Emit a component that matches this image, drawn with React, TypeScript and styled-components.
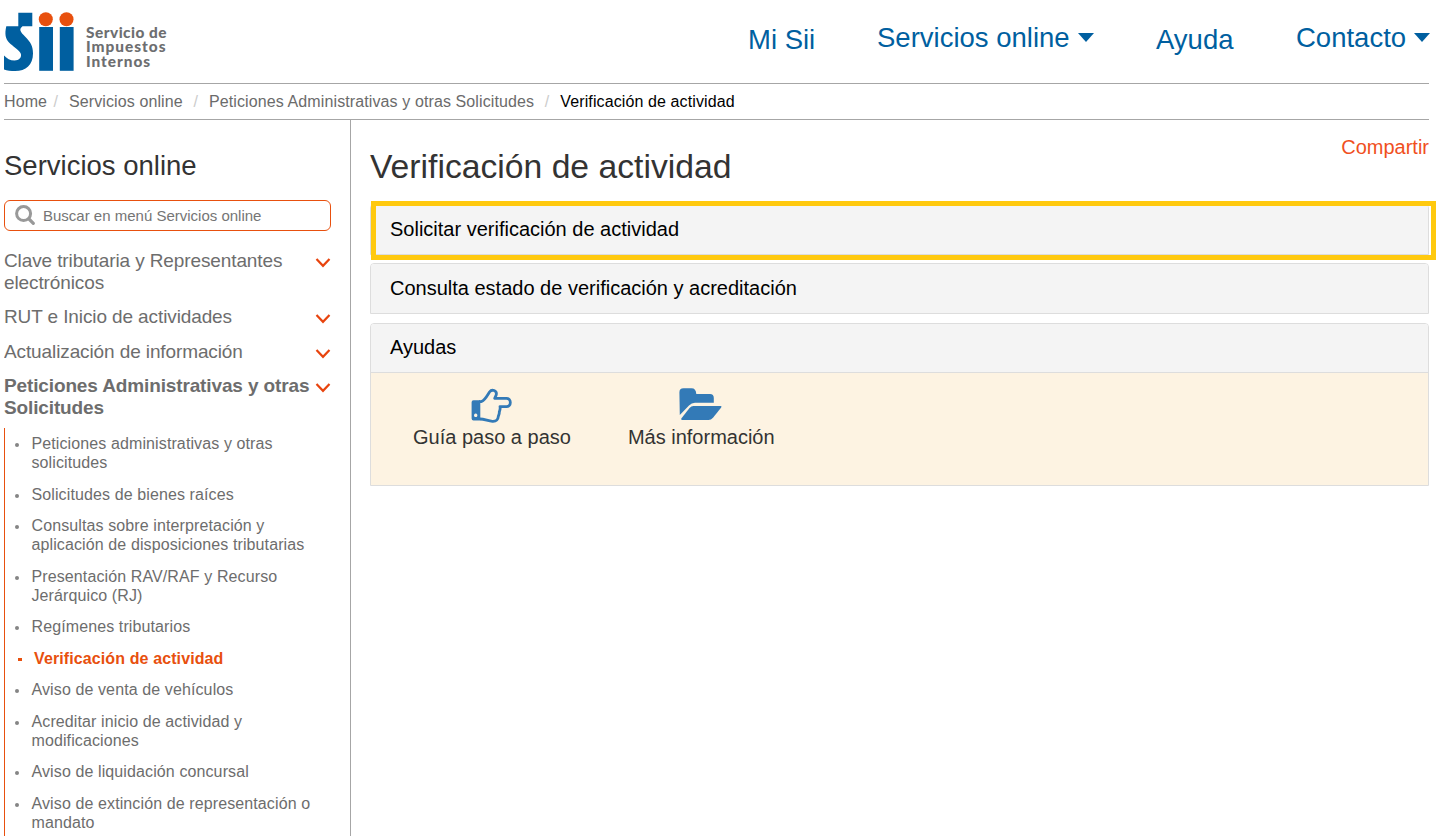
import React from "react";
import styled, { createGlobalStyle } from "styled-components";

const GlobalStyle = createGlobalStyle`
  *, *::before, *::after { box-sizing: border-box; }
  body {
    margin: 0;
    background: #fff;
    color: #333;
    font-family: "Liberation Sans", Arial, sans-serif;
    overflow: hidden;
  }
  h1, h2, p, ul, ol { margin: 0; padding: 0; font-weight: 400; }
  ul, ol { list-style: none; }
`;

const Page = styled.div`
  display: flex;
  flex-direction: column;
  height: 836px;
  padding: 0 15px 0 4px;
  overflow: hidden;
`;

const Header = styled.header`
  display: flex;
  justify-content: space-between;
  height: 84px;
  border-bottom: 1px solid #a6a6a6;
`;

const Brand = styled.div`
  display: flex;
  align-items: flex-start;
  padding-top: 12px;
`;

const BrandName = styled.div`
  margin: 13px 0 0 11px;
  font-family: Lato, sans-serif;
  font-size: 15.4px;
  font-weight: 900;
  line-height: 14.4px;
  color: #6d6e70;
`;

const BrandLine = styled.div<{ $spacing: number }>`
  letter-spacing: ${(p) => p.$spacing}px;
  white-space: nowrap;
`;

const Nav = styled.nav`
  display: flex;
  align-items: flex-start;
  margin-right: -1px;
`;

const NavItem = styled.a<{ $width: number; $top?: number }>`
  display: flex;
  justify-content: space-between;
  align-items: flex-start;
  width: ${(p) => p.$width}px;
  margin-left: 62px;
  padding-top: ${(p) => p.$top ?? 21}px;
  font-size: 27.5px;
  line-height: 34px;
  color: #005fa0;
  white-space: nowrap;
`;

const Caret = styled.span`
  margin-top: 12px;
  border: 8px solid transparent;
  border-top: 9px solid #005fa0;
  border-bottom: 0;
`;

const Breadcrumb = styled.ol`
  display: flex;
  height: 36px;
  padding-bottom: 1px;
  border-bottom: 1px solid #a6a6a6;
  font-size: 16px;
  line-height: 35px;
  letter-spacing: 0.11px;
  white-space: nowrap;
`;

const Crumb = styled.li<{ $current?: boolean }>`
  color: ${(p) => (p.$current ? "#000" : "#6b6b6b")};
  &:not(:first-child)::before {
    content: "/";
    margin: 0 11px 0 10.6px;
    color: #ccc;
  }
  &:nth-child(2)::before { margin-left: 6.3px; }
`;

const Columns = styled.div`
  display: flex;
  flex: 1;
  min-height: 0;
`;

const Sidebar = styled.aside`
  width: 347px;
  flex: none;
  padding-right: 19px;
  border-right: 1px solid #a6a6a6;
  overflow: hidden;
`;

const SidebarTitle = styled.h2`
  margin-top: 29px;
  font-size: 27.5px;
  line-height: 34px;
`;

const SearchBox = styled.div`
  display: flex;
  align-items: center;
  height: 31px;
  margin-top: 17px;
  padding-left: 10px;
  border: 1px solid #e8500e;
  border-radius: 6px;
  gap: 8px;
  svg { margin-top: -2px; }
`;

const SearchHint = styled.span`
  font-size: 15px;
  color: #757575;
  white-space: nowrap;
`;

const Menu = styled.ul`
  margin-top: 19px;
`;

const MenuItem = styled.li<{ $active?: boolean; $gap: number }>`
  display: flex;
  justify-content: space-between;
  margin-bottom: ${(p) => p.$gap}px;
  font-size: 19px;
  font-weight: ${(p) => (p.$active ? 700 : 400)};
  line-height: 22px;
  letter-spacing: ${(p) => (p.$active ? -0.13 : -0.11)}px;
  color: #6d6d6d;
  white-space: nowrap;
  svg { flex: none; margin-top: 8px; }
`;

const SubMenu = styled.ul`
  padding: 6px 0 0 26.5px;
  border-left: 1px solid #e8500e;
  height: 440px;
`;

const SubItem = styled.li<{ $active?: boolean }>`
  position: relative;
  margin-bottom: 12.4px;
  padding-left: ${(p) => (p.$active ? 2.5 : 0)}px;
  font-size: 16px;
  font-weight: ${(p) => (p.$active ? 700 : 400)};
  line-height: 19.1px;
  letter-spacing: 0.11px;
  color: ${(p) => (p.$active ? "#e8500e" : "#6d6d6d")};
  white-space: nowrap;
  &::before {
    content: "";
    position: absolute;
    top: 9px;
    left: ${(p) => (p.$active ? -13.5 : -16.5)}px;
    width: 4px;
    height: ${(p) => (p.$active ? 3 : 4)}px;
    border-radius: ${(p) => (p.$active ? 0 : 2)}px;
    background: ${(p) => (p.$active ? "#e8500e" : "#858585")};
  }
`;

const Main = styled.main`
  flex: 1;
  padding-left: 19px;
`;

const TitleRow = styled.div`
  display: flex;
  justify-content: space-between;
  height: 84px;
`;

const Title = styled.h1`
  padding-top: 26px;
  font-size: 33.7px;
  line-height: 40px;
`;

const Share = styled.a`
  padding-top: 15px;
  font-size: 20px;
  line-height: 24px;
  color: #f0501e;
`;

const Panel = styled.section<{ $gap?: number }>`
  position: relative;
  margin-bottom: ${(p) => p.$gap ?? 9}px;
  border: 1px solid #ddd;
  border-radius: 4px 4px 0 0;
`;

const PanelHeading = styled.div<{ $height: number }>`
  height: ${(p) => p.$height}px;
  padding-left: 19px;
  border-radius: 3px 3px 0 0;
  background: #f4f4f4;
  font-size: 20px;
  line-height: ${(p) => (p.$height === 48 ? 47 : 49)}px;
  color: #000;
`;

const Highlight = styled.div`
  position: absolute;
  inset: -4px -8px -6px 0;
  border: 5px solid #ffc90e;
`;

const HelpBody = styled.div`
  display: flex;
  height: 113px;
  border-top: 1px solid #ddd;
  background: #fdf3e2;
  padding: 15px 0 0 42px;
  gap: 57px;
`;

const HelpLink = styled.a`
  display: flex;
  flex-direction: column;
  align-items: center;
  font-size: 20px;
  line-height: 24px;
  color: #333;
  svg { margin: 0 2px 1px 0; }
  &:first-child svg { margin-right: 0; }
`;

const Logo = () => (
  <svg width="71" height="60" viewBox="0 0 71 60">
    <g fill="#005fa0">
      <path d="M14.300 .7H28.300V14.300H18.500C14.500 17.500 16.500 20 21 24.500C26.500 30 29 34 29 41.500C29 53 22 59 11 59C7 59 3 58.500 0 57.500V43.500C3 46.500 6 48.500 10.500 48.500C15 48.500 18.500 45 16.500 41C14.500 37.500 9 34.500 5 30.500C1.500 27 .5 22 2.300 14.300H14.300Z" />
      <rect x="35.200" y="15" width="13.800" height="43.800" />
      <rect x="55.800" y="15" width="13.800" height="43.800" />
    </g>
    <g fill="#e8500e">
      <circle cx="41.800" cy="7.300" r="7" />
      <circle cx="62.500" cy="7.300" r="7" />
    </g>
  </svg>
);

const SearchIcon = () => (
  <svg width="20" height="20" viewBox="0 0 20 20" fill="none" stroke="#999">
    <circle cx="8.600" cy="8.600" r="7" strokeWidth="3" />
    <path d="M14 14L18.300 18.300" strokeWidth="3.200" strokeLinecap="round" />
  </svg>
);

const Chevron = () => (
  <svg width="16" height="10" viewBox="0 0 16 10" fill="none" stroke="#e8440e" strokeWidth="2.2">
    <path d="M1.5 1L8 7.8L14.5 1" />
  </svg>
);

const HandIcon = () => (
  <svg width="42" height="36" viewBox="0 0 42 36">
    <path
      fill="none"
      stroke="#337ab7"
      strokeWidth="2.800"
      strokeLinejoin="round"
      d="M8 13.600H10.500C14 12 16 8 18.500 4C21 .8 26 2.500 25.300 6.500C25 8.200 24 9 23.700 10.400H35.500C40.600 10.400 40.600 18.600 35.500 18.600H29C29.600 21 28.800 22.500 28.300 24C28.500 26 27.500 27 27.300 28.500C27 32 25.500 33.500 21.500 33.300C17 33 13.500 31 9 31"
    />
    <path
      fill="#337ab7"
      fillRule="evenodd"
      d="M2.500 12.300H9.300V32.500H2.500Q.6 32.500 .6 30.500V14.300Q.6 12.300 2.500 12.300ZM4.700 25.600a1.700 1.700 0 1 0 .01 0Z"
    />
  </svg>
);

const FolderIcon = () => (
  <svg width="43" height="36" viewBox="0 0 43 36" fill="#337ab7">
    <path d="M.4 4.500Q.4 .3 4.500 .3H12.500Q17 .3 17.300 6H31Q34.800 6 34.800 10V14.700H16Q12.500 14.700 10 17.500L.8 27Z" />
    <path d="M14.500 18H41.500Q43.200 18 42 19.700L34 29.700Q32 31.900 29.500 31.900H3.500Q1.500 31.900 2.500 30.200L10.500 20Q12.200 18 14.500 18Z" />
  </svg>
);

const menu = [
  { lines: ["Clave tributaria y Representantes", "electrónicos"], gap: 12 },
  { lines: ["RUT e Inicio de actividades"], gap: 13 },
  { lines: ["Actualización de información"], gap: 12 },
  { lines: ["Peticiones Administrativas y otras", "Solicitudes"], gap: 9, active: true },
];

const subMenu = [
  { lines: ["Peticiones administrativas y otras", "solicitudes"] },
  { lines: ["Solicitudes de bienes raíces"] },
  { lines: ["Consultas sobre interpretación y", "aplicación de disposiciones tributarias"] },
  { lines: ["Presentación RAV/RAF y Recurso", "Jerárquico (RJ)"] },
  { lines: ["Regímenes tributarios"] },
  { lines: ["Verificación de actividad"], active: true },
  { lines: ["Aviso de venta de vehículos"] },
  { lines: ["Acreditar inicio de actividad y", "modificaciones"] },
  { lines: ["Aviso de liquidación concursal"] },
  { lines: ["Aviso de extinción de representación o", "mandato"] },
];

const Lines = ({ lines }: { lines: string[] }) => (
  <span>
    {lines.map((line, i) => (
      <React.Fragment key={line}>
        {i > 0 && <br />}
        {line}
      </React.Fragment>
    ))}
  </span>
);

export default function App() {
  return (
    <>
      <GlobalStyle />
      <Page>
        <Header>
          <Brand>
            <Logo />
            <BrandName>
              <BrandLine $spacing={0.48}>Servicio de</BrandLine>
              <BrandLine $spacing={1}>Impuestos</BrandLine>
              <BrandLine $spacing={0.95}>Internos</BrandLine>
            </BrandName>
          </Brand>
          <Nav>
            <NavItem $width={67} $top={23}>Mi Sii</NavItem>
            <NavItem $width={217}>Servicios online<Caret /></NavItem>
            <NavItem $width={78} $top={23}>Ayuda</NavItem>
            <NavItem $width={134}>Contacto<Caret /></NavItem>
          </Nav>
        </Header>
        <Breadcrumb>
          <Crumb>Home</Crumb>
          <Crumb>Servicios online</Crumb>
          <Crumb>Peticiones Administrativas y otras Solicitudes</Crumb>
          <Crumb $current>Verificación de actividad</Crumb>
        </Breadcrumb>
        <Columns>
          <Sidebar>
            <SidebarTitle>Servicios online</SidebarTitle>
            <SearchBox>
              <SearchIcon />
              <SearchHint>Buscar en menú Servicios online</SearchHint>
            </SearchBox>
            <Menu>
              {menu.map((item) => (
                <MenuItem key={item.lines[0]} $active={item.active} $gap={item.gap}>
                  <Lines lines={item.lines} />
                  <Chevron />
                </MenuItem>
              ))}
            </Menu>
            <SubMenu>
              {subMenu.map((item) => (
                <SubItem key={item.lines[0]} $active={item.active}>
                  <Lines lines={item.lines} />
                </SubItem>
              ))}
            </SubMenu>
          </Sidebar>
          <Main>
            <TitleRow>
              <Title>Verificación de actividad</Title>
              <Share>Compartir</Share>
            </TitleRow>
            <Panel $gap={8}>
              <PanelHeading $height={49}>Solicitar verificación de actividad</PanelHeading>
              <Highlight />
            </Panel>
            <Panel>
              <PanelHeading $height={49}>Consulta estado de verificación y acreditación</PanelHeading>
            </Panel>
            <Panel>
              <PanelHeading $height={48}>Ayudas</PanelHeading>
              <HelpBody>
                <HelpLink><HandIcon />Guía paso a paso</HelpLink>
                <HelpLink><FolderIcon />Más información</HelpLink>
              </HelpBody>
            </Panel>
          </Main>
        </Columns>
      </Page>
    </>
  );
}
